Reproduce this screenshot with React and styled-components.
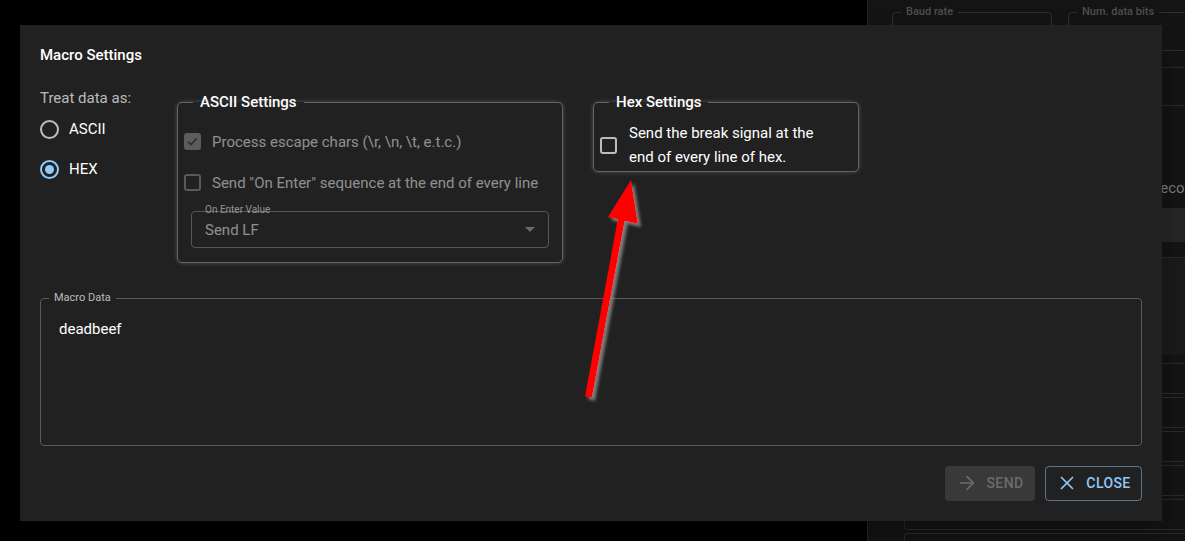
import React from "react";
import styled, { createGlobalStyle } from "styled-components";
import { ArrowRight, X } from "lucide-react";

const GlobalStyle = createGlobalStyle`
  html, body {
    margin: 0;
    padding: 0;
    background: #000;
  }
  body {
    font-family: Roboto, "Liberation Sans", sans-serif;
  }
`;

const Screen = styled.div`
  position: relative;
  display: flex;
  width: 1185px;
  height: 541px;
  overflow: hidden;
  background: #000;
`;

const Backdrop = styled.div`
  flex: none;
  width: 867px;
  background: #000;
`;

/* dimmed app panel behind the modal */
const SidePanel = styled.div`
  flex: 1;
  display: flex;
  flex-direction: column;
  padding-top: 5px;
  background: #141414;
  border-left: 1px solid #252525;
`;

const FieldRow = styled.div`
  display: flex;
  gap: 16px;
  padding-left: 24px;
`;

const MiniField = styled.fieldset`
  box-sizing: border-box;
  flex: ${(p) => (p.$grow ? "1 0 auto" : "none")};
  width: ${(p) => p.$width || "auto"};
  height: 46px;
  margin: 0;
  padding: 0;
  border: 1px solid #2e2e2e;
  border-radius: 4px;
  legend {
    margin-left: 8px;
    padding: 0 5px;
    font-size: 11px;
    font-weight: 500;
    line-height: 14px;
    color: #4f4f4f;
  }
`;

const Band = styled.div`
  flex: none;
  height: ${(p) => p.$h}px;
  background: ${(p) => p.$bg || "transparent"};
  border-bottom: ${(p) => (p.$line ? "1px solid #2a2a2a" : "none")};
`;

const GhostText = styled.div`
  height: 22px;
  padding-left: 283px;
  font-size: 15px;
  line-height: 22px;
  color: #7a7a7a;
  white-space: nowrap;
`;

const GhostList = styled.div`
  display: flex;
  flex-direction: column;
  gap: 3px;
  padding-left: 36px;
`;

const GhostItem = styled.div`
  height: 31px;
  box-sizing: border-box;
  border: 1px solid #2a2a2a;
  border-right: none;
  border-radius: 4px 0 0 4px;
`;

/* modal */
const Dialog = styled.div`
  position: absolute;
  left: 20px;
  top: 25px;
  width: 1142px;
  height: 496px;
  box-sizing: border-box;
  display: flex;
  flex-direction: column;
  padding: 18px 20px 20px;
  background: #212121;
  box-shadow: 0 11px 15px -7px rgba(0, 0, 0, 0.2), 0 24px 38px 3px rgba(0, 0, 0, 0.14);
  color: #fff;
`;

const Title = styled.h2`
  margin: 0;
  font-size: 15px;
  font-weight: 500;
  line-height: 24px;
`;

const Options = styled.div`
  display: flex;
  align-items: flex-start;
  margin-top: 20px;
`;

const RadioColumn = styled.div`
  flex: none;
  width: 137px;
  display: flex;
  flex-direction: column;
`;

const GroupLabel = styled.div`
  font-size: 15px;
  line-height: 22px;
  color: rgba(255, 255, 255, 0.7);
`;

const RadioRow = styled.label`
  display: flex;
  align-items: center;
  height: 40px;
  font-size: 15px;
  color: #fff;
`;

const RadioCircle = styled.span`
  flex: none;
  display: flex;
  align-items: center;
  justify-content: center;
  width: 19px;
  height: 19px;
  margin-right: 10px;
  box-sizing: border-box;
  border-radius: 50%;
  border: 2px solid ${(p) => (p.$checked ? "#90caf9" : "rgba(255,255,255,0.7)")};
  &::after {
    content: "";
    display: ${(p) => (p.$checked ? "block" : "none")};
    width: 9px;
    height: 9px;
    border-radius: 50%;
    background: #90caf9;
  }
`;

const SettingsBox = styled.fieldset`
  flex: none;
  box-sizing: border-box;
  width: ${(p) => p.$width}px;
  min-width: 0;
  margin: 4px 0 0 ${(p) => p.$gap || 0}px;
  padding: 0;
  border: 1px solid rgba(255, 255, 255, 0.3);
  border-radius: 5px;
  box-shadow: 0 0 4px rgba(255, 255, 255, 0.22);
  legend {
    margin-left: 15px;
    padding: 0 7px;
    font-size: 15px;
    font-weight: 500;
    line-height: 22px;
    color: #fff;
  }
`;

const BoxBody = styled.div`
  display: flex;
  flex-direction: ${(p) => (p.$row ? "row" : "column")};
  align-items: ${(p) => (p.$row ? "center" : "stretch")};
  padding: ${(p) => p.$pad};
`;

const CheckRow = styled.label`
  display: flex;
  align-items: center;
  height: 41px;
  padding-left: 6px;
  font-size: 15px;
  color: ${(p) => (p.$disabled ? "rgba(255,255,255,0.5)" : "#fff")};
`;

const CheckBox = styled.span`
  flex: none;
  display: flex;
  align-items: center;
  justify-content: center;
  width: 17px;
  height: 17px;
  margin-right: ${(p) => p.$space || 11}px;
  box-sizing: border-box;
  border-radius: 3px;
  border: 2px solid
    ${(p) =>
      p.$checked ? "#5c5c5c" : p.$disabled ? "#5a5a5a" : "rgba(255,255,255,0.7)"};
  background: ${(p) => (p.$checked ? "#5c5c5c" : "transparent")};
`;

const HexLabel = styled.span`
  max-width: 205px;
  font-size: 15px;
  line-height: 24px;
  color: #fff;
`;

const SelectBox = styled.div`
  position: relative;
  display: flex;
  align-items: center;
  justify-content: space-between;
  height: 37px;
  margin: 8px 13px 0 13px;
  padding: 0 13px;
  box-sizing: border-box;
  border: 1px solid #565656;
  border-radius: 4px;
  font-size: 15px;
  color: rgba(255, 255, 255, 0.5);
`;

const FloatLabel = styled.span`
  position: absolute;
  left: 13px;
  top: -8px;
  font-size: 10px;
  line-height: 12px;
  color: rgba(255, 255, 255, 0.5);
`;

const Caret = styled.span`
  width: 0;
  height: 0;
  border-left: 5px solid transparent;
  border-right: 5px solid transparent;
  border-top: 5px solid #6a6a6a;
`;

const MacroField = styled.fieldset`
  box-sizing: border-box;
  height: 155px;
  min-width: 0;
  margin: 28px 0 0;
  padding: 0;
  border: 1px solid #5a5a5a;
  border-radius: 4px;
  legend {
    margin-left: 8px;
    padding: 0 5px;
    font-size: 11px;
    line-height: 14px;
    color: rgba(255, 255, 255, 0.7);
  }
`;

const MacroText = styled.div`
  padding: 13px 18px;
  font-size: 15px;
  line-height: 22px;
  color: #fff;
`;

const Actions = styled.div`
  display: flex;
  justify-content: flex-end;
  gap: 10px;
  margin-top: 20px;
`;

const Button = styled.button`
  display: flex;
  align-items: center;
  justify-content: center;
  gap: 8px;
  width: ${(p) => p.$width}px;
  height: 35px;
  padding: 0 0 1px;
  box-sizing: border-box;
  border-radius: 4px;
  font-family: inherit;
  font-size: 14px;
  font-weight: 500;
  letter-spacing: 0.4px;
  text-transform: uppercase;
  border: 1px solid ${(p) => (p.$outlined ? "rgba(144,202,249,0.5)" : "transparent")};
  background: ${(p) => (p.$outlined ? "transparent" : "#393939")};
  color: ${(p) => (p.$outlined ? "#90caf9" : "#6c6c6c")};
`;

const Annotation = styled.svg`
  position: absolute;
  left: 0;
  top: 0;
  pointer-events: none;
`;

export default function App() {
  return (
    <>
      <GlobalStyle />
      <Screen>
        <Backdrop />
        <SidePanel>
          <FieldRow>
            <MiniField $width="160px">
              <legend>Baud rate</legend>
            </MiniField>
            <MiniField $grow>
              <legend>Num. data bits</legend>
            </MiniField>
          </FieldRow>
          <Band $h={16} $line />
          <Band $h={37} $line />
          <Band $h={71} />
          <GhostText>Record data</GhostText>
          <Band $h={9} />
          <Band $h={34} $bg="#262626" />
          <Band $h={15} $line />
          <Band $h={97} $bg="#1a1a1a" />
          <Band $h={8} />
          <GhostList>
            {[0, 1, 2, 3, 4, 5].map((i) => (
              <GhostItem key={i} />
            ))}
          </GhostList>
        </SidePanel>

        <Dialog>
          <Title>Macro Settings</Title>
          <Options>
            <RadioColumn>
              <GroupLabel>Treat data as:</GroupLabel>
              <RadioRow>
                <RadioCircle />
                ASCII
              </RadioRow>
              <RadioRow>
                <RadioCircle $checked />
                HEX
              </RadioRow>
            </RadioColumn>

            <SettingsBox $width={386}>
              <legend>ASCII Settings</legend>
              <BoxBody $pad="8px 0 14px">
                <CheckRow $disabled>
                  <CheckBox $checked $disabled>
                    <svg width="13" height="13" viewBox="0 0 24 24">
                      <path
                        d="M4 12.5l5 5L20 6.5"
                        fill="none"
                        stroke="#2c2c2c"
                        strokeWidth="3"
                      />
                    </svg>
                  </CheckBox>
                  Process escape chars (\r, \n, \t, e.t.c.)
                </CheckRow>
                <CheckRow $disabled>
                  <CheckBox $disabled />
                  Send "On Enter" sequence at the end of every line
                </CheckRow>
                <SelectBox>
                  <FloatLabel>On Enter Value</FloatLabel>
                  Send LF
                  <Caret />
                </SelectBox>
              </BoxBody>
            </SettingsBox>

            <SettingsBox $width={266} $gap={30}>
              <legend>Hex Settings</legend>
              <BoxBody $row $pad="8px 0 2px 6px">
                <CheckBox $space={12} />
                <HexLabel>Send the break signal at the end of every line of hex.</HexLabel>
              </BoxBody>
            </SettingsBox>
          </Options>

          <MacroField>
            <legend>Macro Data</legend>
            <MacroText>deadbeef</MacroText>
          </MacroField>

          <Actions>
            <Button $width={90} disabled>
              <ArrowRight size={22} strokeWidth={1.8} />
              Send
            </Button>
            <Button $width={97} $outlined>
              <X size={22} strokeWidth={1.8} />
              Close
            </Button>
          </Actions>
        </Dialog>

        <Annotation width="1185" height="541" viewBox="0 0 1185 541">
          <defs>
            <filter id="arrowShadow" x="-50%" y="-20%" width="200%" height="140%">
              <feDropShadow dx="3" dy="3" stdDeviation="1.8" floodColor="#9a9a9a" floodOpacity="0.75" />
            </filter>
          </defs>
          <g filter="url(#arrowShadow)" fill="#ff0000">
            <line x1="588.5" y1="397" x2="622" y2="216" stroke="#ff0000" strokeWidth="7" />
            <polygon points="608,217 631,180 638,224" />
          </g>
        </Annotation>
      </Screen>
    </>
  );
}
